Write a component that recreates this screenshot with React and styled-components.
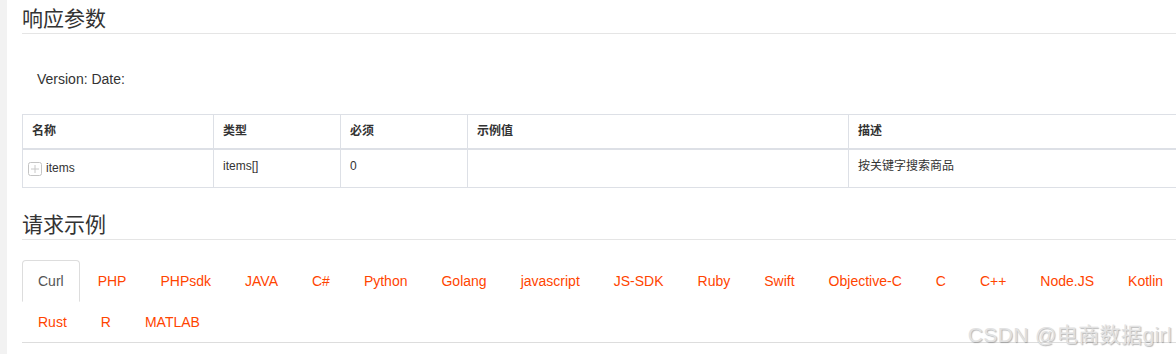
import React from "react";
import styled, { createGlobalStyle } from "styled-components";

const GlobalStyle = createGlobalStyle`
	html, body {
		margin: 0;
		padding: 0;
		background: #ffffff;
		overflow: hidden;
	}
	body {
		font-family: "Liberation Sans", "Noto Sans CJK SC", Arial, sans-serif;
		color: #333333;
	}
`;

const Page = styled.div`
	position: relative;
	display: flex;
	width: 1176px;
	height: 354px;
	overflow: hidden;
`;

const SideEdge = styled.div`
	flex: 0 0 7px;
	background: #f2f2f2;
`;

const Main = styled.div`
	flex: 0 0 1200px;
	padding: 3px 0 0 15px;
`;

const SectionTitle = styled.h3`
	margin: ${(p) => (p.$first ? "0" : "21px 0 0")};
	padding-bottom: 2px;
	font-family: "Noto Sans CJK SC", "Liberation Sans", sans-serif;
	font-size: 21px;
	font-weight: 400;
	line-height: 28px;
	color: #333333;
	border-bottom: 1px solid #e5e5e5;
`;

const VersionLine = styled.p`
	margin: 35px 0 25px;
	padding-left: 15px;
	font-size: 14px;
	line-height: 20px;
	color: #333333;
`;

const Table = styled.table`
	width: 100%;
	table-layout: fixed;
	border-collapse: collapse;
	font-size: 12px;
	line-height: 17px;
	color: #333333;
`;

const Col = styled.col`
	width: ${(p) => p.$w || "auto"};
`;

const Th = styled.th`
	padding: 8px 9px;
	text-align: left;
	font-weight: 700;
	border: 1px solid #dde0e6;
	border-bottom: 2px solid #dde0e6;
`;

const Td = styled.td`
	padding: 8px 9px;
	vertical-align: top;
	border: 1px solid #dde0e6;
`;

const NameCell = styled.div`
	display: flex;
	align-items: center;
	gap: 4px;
	height: 21px;
	margin-left: -4px;
`;

const PlusBox = () => (
	<svg width="14" height="14" viewBox="0 0 14 14">
		<rect x="0.5" y="0.5" width="13" height="13" rx="2" fill="#fff" stroke="#c4c4c4" />
		<path d="M3 7h8M7 3v8" stroke="#c8c8c8" strokeWidth="1" />
	</svg>
);

const Tabs = styled.ul`
	display: flex;
	flex-wrap: wrap;
	list-style: none;
	margin: 20px 0 0;
	padding: 0;
	border-bottom: 1px solid #dddddd;
`;

const Tab = styled.li`
	margin: 0 2px -1px 0;
	padding: 10px 15px;
	font-size: 14px;
	line-height: 20px;
	color: ${(p) => (p.$active ? "#555555" : "#ff4400")};
	border: 1px solid ${(p) => (p.$active ? "#dddddd" : "transparent")};
	border-bottom-color: transparent;
	border-radius: 4px 4px 0 0;
	background: ${(p) => (p.$active ? "#ffffff" : "transparent")};
	cursor: pointer;
`;

const Watermark = styled.div`
	position: absolute;
	right: 4px;
	bottom: 8px;
	font-family: "Liberation Sans", "Noto Sans CJK SC", sans-serif;
	font-size: 21px;
	font-weight: 400;
	letter-spacing: 0.4px;
	line-height: 22px;
	color: #e2e2e2;
	text-shadow: 1px 1px 1px rgba(0, 0, 0, 0.28);
	pointer-events: none;
`;

const langs = [
	"Curl", "PHP", "PHPsdk", "JAVA", "C#", "Python", "Golang", "javascript",
	"JS-SDK", "Ruby", "Swift", "Objective-C", "C", "C++", "Node.JS", "Kotlin",
	"Rust", "R", "MATLAB",
];

const App = () => (
	<>
		<GlobalStyle />
		<Page>
			<SideEdge />
			<Main>
				<SectionTitle $first>响应参数</SectionTitle>
				<VersionLine>Version: Date:</VersionLine>
				<Table>
					<colgroup>
						<Col $w="191px" />
						<Col $w="127px" />
						<Col $w="127px" />
						<Col $w="381px" />
						<Col />
					</colgroup>
					<thead>
						<tr>
							<Th>名称</Th>
							<Th>类型</Th>
							<Th>必须</Th>
							<Th>示例值</Th>
							<Th>描述</Th>
						</tr>
					</thead>
					<tbody>
						<tr>
							<Td>
								<NameCell>
									<PlusBox />
									items
								</NameCell>
							</Td>
							<Td>items[]</Td>
							<Td>0</Td>
							<Td></Td>
							<Td>按关键字搜索商品</Td>
						</tr>
					</tbody>
				</Table>
				<SectionTitle>请求示例</SectionTitle>
				<Tabs>
					{langs.map((l, i) => (
						<Tab key={l} $active={i === 0}>
							{l}
						</Tab>
					))}
				</Tabs>
			</Main>
			<Watermark>CSDN @电商数据girl</Watermark>
		</Page>
	</>
);

export default App;
